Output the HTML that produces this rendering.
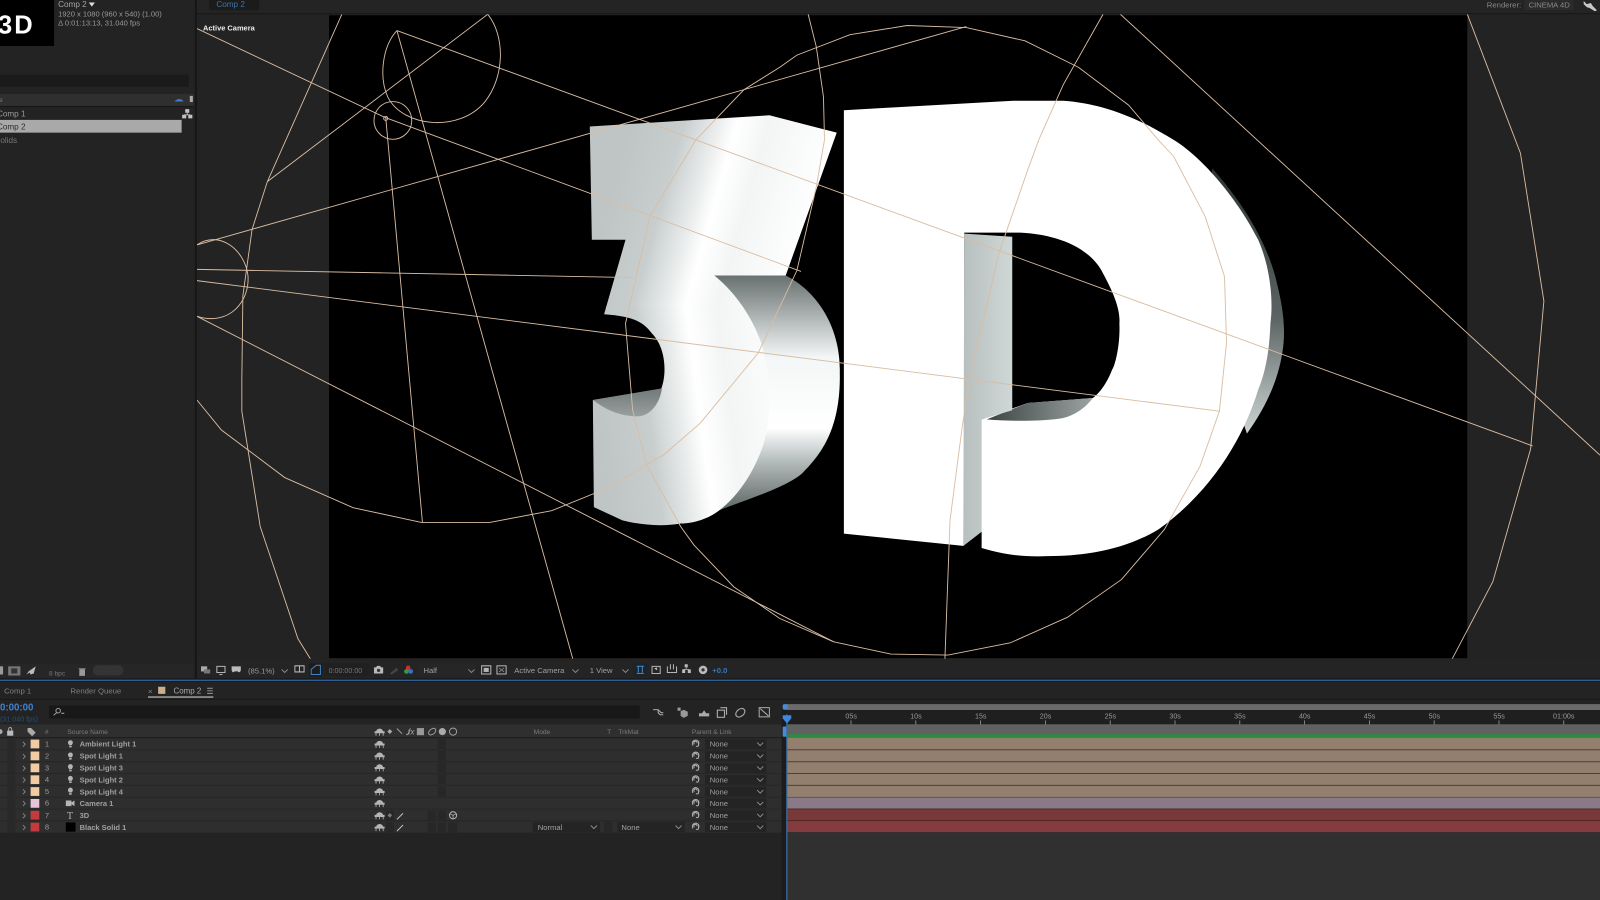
<!DOCTYPE html>
<html><head><meta charset="utf-8"><style>
html,body{margin:0;padding:0;background:#232323;overflow:hidden}
svg{display:block;filter:blur(.35px)}
text{font-family:"Liberation Sans",sans-serif;font-size:8px;fill:#9a9a9a}
.b{font-weight:bold;font-size:7.35px;fill:#a0a0a0}
.h{font-size:6.5px;fill:#7c7c7c}
.t{font-size:7.5px;fill:#a0a0a0}
.w{fill:none;stroke:#d9bda3;stroke-width:.9}
.ic{fill:#b5b5b5}
.ol{fill:none;stroke:#b5b5b5;stroke-width:1}
</style></head><body>
<svg width="1600" height="900" viewBox="0 0 1568 882" xmlns="http://www.w3.org/2000/svg">
<defs>
<linearGradient id="f3a" gradientUnits="userSpaceOnUse" x1="576" y1="273" x2="768" y2="327"><stop offset="0" stop-color="#bfc5c5"/><stop offset=".25" stop-color="#c8cece"/><stop offset=".5" stop-color="#ffffff"/><stop offset=".65" stop-color="#f3f5f5"/><stop offset="1" stop-color="#ffffff"/></linearGradient>
<linearGradient id="f3b" gradientUnits="userSpaceOnUse" x1="573" y1="313" x2="771" y2="287"><stop offset="0" stop-color="#bfc5c5"/><stop offset=".25" stop-color="#c8cece"/><stop offset=".5" stop-color="#ffffff"/><stop offset=".65" stop-color="#f3f5f5"/><stop offset="1" stop-color="#ffffff"/></linearGradient>
<linearGradient id="s3" gradientUnits="userSpaceOnUse" x1="0" y1="270" x2="0" y2="500"><stop offset="0" stop-color="#687070"/><stop offset=".35" stop-color="#f4f7f7"/><stop offset=".65" stop-color="#ffffff"/><stop offset=".8" stop-color="#b0b8b8"/><stop offset="1" stop-color="#5e6666"/></linearGradient>
<linearGradient id="sd" gradientUnits="userSpaceOnUse" x1="0" y1="170" x2="0" y2="425"><stop offset="0" stop-color="#2f3636"/><stop offset=".55" stop-color="#5a6262"/><stop offset=".85" stop-color="#a8b0b0"/><stop offset="1" stop-color="#ccd2d2"/></linearGradient>
<linearGradient id="st" gradientUnits="userSpaceOnUse" x1="945" y1="0" x2="992" y2="0"><stop offset="0" stop-color="#b7bfbf"/><stop offset="1" stop-color="#d0d7d7"/></linearGradient>
<linearGradient id="cb" gradientUnits="userSpaceOnUse" x1="970" y1="0" x2="1070" y2="0"><stop offset="0" stop-color="#3e4646"/><stop offset="1" stop-color="#9aa2a2"/></linearGradient>
<linearGradient id="h3" gradientUnits="userSpaceOnUse" x1="0" y1="381" x2="0" y2="408"><stop offset="0" stop-color="#717979"/><stop offset="1" stop-color="#979f9f"/></linearGradient>
<clipPath id="v"><rect x="193" y="14" width="1375" height="632"/></clipPath>
<clipPath id="cu"><rect x="560" y="100" width="280" height="202"/></clipPath>
<clipPath id="cl"><rect x="560" y="300" width="280" height="230"/></clipPath>
<path id="f3p" d="M578,124L754,113L820,130L770,270L700,270C725,290 742,320 748,343C757,380 755,410 748,436C740,460 725,485 705,500C695,508 680,513 667,513C650,516 630,515 610,510L582,497L581,392L648,381C654,365 652,340 639,327C630,315 620,310 592,308L613,235L580,235Z"/>
<g id="sh"><path class="ic" d="M369,3a3,2.6 0 0 1 6,0h1.5v1.2h-9V3zM368.5,4.6v2.4M375.5,4.6v2.4M372,4.6v2.4" stroke="#b5b5b5" stroke-width=".8"/></g>
<g id="lt"><path class="ic" d="M0,-3.6a2.4,2.4 0 0 1 2.4,2.4c0,1-.7,1.5-1,2.4h-2.8c-.3-.9-1-1.4-1-2.4A2.4,2.4 0 0 1 0,-3.6zM-1.2,1.8h2.4v1.6h-2.4z"/></g>
<g id="sp"><path class="ol" d="M-2.8,1.5a3.2,3.2 0 1 1 5.4,-.6M2.6,-2.6v4.1a1.4,1.4 0 0 1-2.4,.5M-1.5,.3a1.6,1.6 0 1 1 2.6,-1" stroke="#8c8c8c" stroke-width=".8"/></g>
<path id="ch" d="M0,0l3,3l3,-3" fill="none" stroke="#909090" stroke-width=".9"/>
<path id="ar" d="M0,0l2.2,2.4l-2.2,2.4" fill="none" stroke="#888" stroke-width=".9"/>
</defs>

<rect width="1568" height="882" fill="#232323"/>

<!-- top bar -->
<rect x="193" y="0" width="1375" height="14" fill="#242424"/>
<rect x="193" y="13" width="1375" height="1" fill="#161616"/>
<rect x="205" y="0" width="49" height="10" fill="#1b1b1b"/>
<text x="212" y="7" fill="#3f74ad" style="fill:#3f74ad">Comp 2</text>
<text x="1457" y="7.500" style="fill:#8a8a8a;font-size:7.600px">Renderer:</text>
<rect x="1494" y="0" width="48" height="10" fill="#2b2b2b"/>
<text x="1498" y="7.500" style="fill:#8a8a8a;font-size:7.500px">CINEMA 4D</text>
<path d="M1552,1l3,3l4,-1l2,3l4,4l-2,1l-5,-3l-3,-1l-3,-3z" fill="#c8c8c8"/>

<!-- project panel -->
<rect x="0" y="0" width="53" height="45" fill="#000"/>
<text x="-2" y="33" style="font-size:25px;font-weight:bold;fill:#fff">3<tspan dx="2">D</tspan></text>
<text x="57" y="7" style="fill:#a4a4a4;font-size:8px">Comp 2</text>
<path d="M87,2.500h6l-3,4z" fill="#ddd"/>
<text x="57" y="16" style="font-size:7.400px">1920 x 1080  (960 x 540) (1.00)</text>
<text x="57" y="25" style="font-size:7.400px">Δ 0:01:13:13, 31.040 fps</text>
<rect x="0" y="73" width="185" height="12" fill="#1a1a1a"/>
<rect x="0" y="92" width="190" height="12" fill="#2f2f2f"/>
<rect x="0" y="104" width="190" height="1" fill="#151515"/>
<text x="-1" y="100" class="h">e</text>
<path d="M171,99.500q5,-5 9,0z" fill="#3f7cc4"/>
<rect x="186" y="94" width="3" height="6" fill="#aaa"/>
<text x="-3" y="114" style="font-size:8px">Comp 1</text>
<rect x="0" y="117.500" width="178" height="12.500" fill="#a9a9a9"/>
<text x="-3" y="127" style="font-size:8px;fill:#2c2c2c">Comp 2</text>
<text x="-5" y="140" style="font-size:8px;fill:#777">Solids</text>
<path d="M181.500,107h4v3.500h-4zM178.500,112.500h4v3.500h-4zM184.500,112.500h4v3.500h-4z" fill="#c2c2c2"/>
<path d="M183.500,110v2.500M180.500,112.500h6" stroke="#c2c2c2" stroke-width=".8"/>
<rect x="191" y="0" width="2" height="666" fill="#161616"/>

<!-- project bottom bar -->
<rect x="0" y="650" width="190" height="15" fill="#262626"/>
<rect x="0" y="653" width="3" height="8" fill="#999"/>
<rect x="8" y="653" width="12" height="9" fill="#777"/><rect x="11" y="655" width="6" height="5" fill="#333"/>
<path d="M26,661l2,-3l7,-5l-2,7l-3,1l-1,-2z" fill="#bbb"/>
<text x="48" y="662" style="font-size:6.500px;fill:#777">8 bpc</text>
<path d="M77,655h7M78,656h5v6h-5z" fill="#999" stroke="#999" stroke-width=".6"/>
<rect x="91" y="652" width="30" height="10" rx="5" fill="#343434"/>

<!-- viewer -->
<rect x="193" y="14" width="130" height="632" fill="#232323"/>
<rect x="322.500" y="15" width="1115.500" height="630" fill="#000"/>
<rect x="1438" y="14" width="130" height="632" fill="#242323"/>
<text x="199" y="30" style="font-size:7.300px;font-weight:bold;fill:#eee">Active Camera</text>

<!-- 3 -->
<path d="M700,270L770,270C800,285 824,320 823,365C824,420 805,445 786,464C770,478 730,490 705,500L700,430Z" fill="url(#s3)"/>
<use href="#f3p" fill="url(#f3a)" clip-path="url(#cu)"/>
<use href="#f3p" fill="url(#f3b)" clip-path="url(#cl)"/>
<path d="M581,392L648.600,380.600C647,395 637,408 625,408C605,408 592,400 581,392Z" fill="url(#h3)"/>

<!-- D -->
<path d="M1188,165C1222,203 1244,243 1252,280C1258,305 1259,320 1258,335C1255,370 1240,400 1222,425L1180,300Z" fill="url(#sd)"/>
<path d="M827,108L993,98.700L1042,98.700C1075,101 1110,112 1150,137C1175,152 1210,190 1233,235C1245,262 1248,295 1245,317C1244,345 1240,365 1233,382C1220,425 1190,480 1135,519C1100,540 1060,545 1027,545C1005,546 985,544 962,537L962,521L944,535L827,523Z" fill="#fff"/>
<path d="M945,228L1000,228C1040,230 1070,245 1081,268C1093,290 1098,305 1097,317C1098,340 1092,360 1090,362C1085,375 1078,385 1071,390L1007,395L962,411L945,411Z" fill="#000"/>
<path d="M967,411L1007,395L1071,390C1062,402 1050,408 1040,410C1020,413 990,413 967,411Z" fill="url(#cb)"/>
<path d="M945,229L992,232L992,402L962,411L962,521L944,535Z" fill="url(#st)"/>

<!-- wireframe -->
<g clip-path="url(#v)">
<path class="w" d="M389,30L1502,437"/>
<path class="w" d="M193,28L377,115L785,266"/>
<path class="w" d="M193,264L620,272"/>
<path class="w" d="M193,275L1195,403"/>
<path class="w" d="M193,240L947,26"/>
<path class="w" d="M193,310L817,629"/>
<path class="w" d="M389,30L562,648"/>
<path class="w" d="M378,115L414,512"/>
<path class="w" d="M335,14L262,178L478,14"/>
<path class="w" d="M262,178L247,225L238,290L237,372L237,403L255,516L292,626L305,647"/>
<path class="w" d="M193,392L217,421.400L279,468L346,497.500L413,512L480,512L540.600,500.500L594.600,478.600L650,446L686,415L743,346L781,265L800,183L808,137L807,95L800,46L792,14"/>
<path class="w" d="M947,27L889,25L833,34L781,54L764,66L729,88L682,137L637,212L613,317L620,402L634,456L667,516L680,534L719,575L764,606L817,629L873,641L929,642L990,630L1046,605L1099,568L1141,519L1176,457L1195,403L1202,336L1200,271L1181,212L1150,153L1135,137L1106,103L1057,66L1004.500,40L947,27"/>
<path class="w" d="M1081,14L1042,83L1018,137L1007,167L979,248L950,372L943,418L931,510L926,646"/>
<path class="w" d="M1098,14L1568,446"/>
<path class="w" d="M1438,14L1490,150L1513,295L1500,440L1463,570L1423,646"/>
<path class="w" d="M389,30C375,45 371,75 380,95C395,125 450,130 475,100C495,75 495,35 478,14"/>
<circle class="w" cx="385" cy="118" r="18.500"/>
<circle class="w" cx="378" cy="116" r="2"/>
<path class="w" d="M193,240C215,225 240,245 243,270C245,295 225,320 193,310"/>
</g>

<!-- viewer toolbar -->
<rect x="193" y="646" width="1375" height="20" fill="#242424"/>
<rect x="193" y="645.500" width="1375" height="1" fill="#2a2020"/>
<rect x="197" y="653" width="6" height="5" fill="#aaa"/><rect x="200" y="656" width="6" height="4" fill="#777"/>
<path d="M212.500,653h8v6h-8zM215,661h3" class="ol"/>
<path d="M227,653h9v4q-1,3 -3,1h-3q-2,2 -3,-1z" fill="#bbb"/>
<text x="243" y="660" style="font-size:7.500px">(85.1%)</text>
<use href="#ch" x="276" y="656"/>
<path d="M289,652.500h9v6h-9zM293.500,652.500v6" class="ol"/>
<rect x="303" y="650" width="13" height="13" fill="#1c1c1c"/>
<path d="M305,661v-5l5,-4h4v9z" fill="none" stroke="#4080c0" stroke-width="1"/>
<rect x="318" y="650" width="44" height="13" fill="#202020"/>
<text x="322" y="659.500" style="font-size:7px;fill:#777">0:00:00:00</text>
<path d="M366.500,654h2l1,-1.500h3l1,1.500h2v6h-9z" fill="#b8b8b8"/><circle cx="371" cy="657" r="1.600" fill="#333"/>
<path d="M382,660l7,-6l1,3l-6,4z" fill="#444"/>
<circle cx="400" cy="654.500" r="2.300" fill="#c83030"/><circle cx="398.300" cy="658" r="2.300" fill="#2e9a4a"/><circle cx="402.500" cy="658" r="2.300" fill="#3a6ec4"/>
<rect x="409" y="650" width="58" height="13" fill="#262626"/>
<text x="415" y="659.500" class="t">Half</text>
<use href="#ch" x="459" y="656"/>
<path d="M472,652.500h9v8h-9z" class="ol"/><rect x="474" y="654.500" width="5" height="4" fill="#b5b5b5"/>
<rect x="487" y="652.500" width="9" height="8" class="ol"/><path d="M489,654.500l5,4M494,654.500l-5,4" stroke="#999" stroke-width=".7"/>
<text x="504" y="659.500" class="t">Active Camera</text>
<use href="#ch" x="561" y="656"/>
<text x="578" y="659.500" class="t">1 View</text>
<use href="#ch" x="610" y="656"/>
<rect x="621" y="650" width="13" height="13" fill="#1c2329"/>
<path d="M624,653h7M625.500,653v6M629.500,653v6M624,660h7" stroke="#3d82c4" stroke-width="1.100" fill="none"/>
<path d="M639,653h8v7h-8z" class="ol"/><path d="M641,655l3,2v-3z" fill="#bbb"/>
<path d="M654,653v6h9v-6M657,651v5M660,651v5" class="ol"/>
<path d="M671,651h3v3h-3zM668.500,656h3v3.500h-3zM674,656h3v3.500h-3z" fill="#bbb"/>
<path d="M672.500,654v2M670,656h5" stroke="#bbb" stroke-width=".7"/>
<circle cx="689" cy="656.500" r="4.200" fill="#bbb"/><circle cx="689" cy="656.500" r="1.600" fill="#333"/>
<text x="698" y="659.500" style="font-size:7.500px;fill:#3a76bb;font-weight:bold">+0.0</text>

<!-- divider -->
<rect x="0" y="665" width="1568" height="1" fill="#131313"/>
<rect x="0" y="666" width="1568" height="1.400" fill="#2f5f92"/>
<rect x="0" y="667.400" width="1568" height="1" fill="#141414"/>

<!-- timeline tabs -->
<rect x="0" y="668" width="1568" height="214" fill="#232323"/>
<text x="4" y="679.500" style="font-size:7.600px;fill:#808080">Comp 1</text>
<text x="69" y="679.500" style="font-size:7.600px;fill:#808080">Render Queue</text>
<text x="145" y="680" style="font-size:7.600px;fill:#888">×</text>
<rect x="155" y="673" width="7" height="7" fill="#c9b18d"/>
<text x="170" y="679.500" style="font-size:7.800px;fill:#aaa">Comp 2</text>
<path d="M203,674.500h5.500M203,677h5.500M203,679.500h5.500" stroke="#999" stroke-width=".9"/>
<rect x="145" y="682.500" width="64" height="1.200" fill="#bbb"/>
<rect x="0" y="685" width="1568" height="1" fill="#191919"/>

<!-- time + search -->
<text x="0" y="696.500" style="font-size:9.500px;font-weight:bold;fill:#3f80cf">0:00:00</text>
<text x="0" y="707" style="font-size:7px;fill:#23507f">(31.040 fps)</text>
<rect x="48" y="691.500" width="579" height="12.500" fill="#181818"/>
<circle cx="57" cy="696.500" r="2.200" fill="none" stroke="#aaa" stroke-width=".9"/>
<path d="M55.500,698.500l-3,2.500M60,699h3" stroke="#aaa" stroke-width=".9"/>
<path d="M640,695.500h5l3,3h2M645,695.500v3l2,2h3" fill="none" stroke="#bbb" stroke-width=".9"/>
<path d="M667,697l3,-1.500l4,2v4l-4,2l-3,-2zM664,693.500h3v3h-3z" fill="#999"/>
<path d="M685,702v-3h10v3zM688,699l2,-3l2,3z" fill="#aaa"/>
<path d="M703,696h7v7h-7zM706,693.500h6v7" fill="none" stroke="#aaa" stroke-width="1.100"/>
<ellipse cx="725.500" cy="698.500" rx="5" ry="3.500" fill="none" stroke="#aaa" stroke-width="1.100" transform="rotate(-40 725.500 698.500)"/>
<rect x="744" y="693.500" width="10" height="9" fill="none" stroke="#aaa"/><path d="M745,694.500l8,7" stroke="#aaa"/>

<!-- layer header -->
<rect x="0" y="710" width="767" height="13" fill="#2f2f2f"/>
<rect x="0" y="722.500" width="767" height="1" fill="#1b1b1b"/>
<circle cx="0" cy="717" r="2.500" fill="#aaa"/>
<rect x="7" y="716" width="6" height="5" fill="#bbb"/><path d="M8.500,716v-1.500a1.500,1.500 0 0 1 3,0v1.500" fill="none" stroke="#bbb" stroke-width=".8"/>
<path d="M27,713.500h3.500l4.500,4.500l-3.500,3.500l-4.500,-4.500z" fill="#aaa"/>
<text x="44" y="719.500" class="h">#</text>
<text x="66" y="719.500" class="h">Source Name</text>
<use href="#sh" x="0" y="714"/>
<path d="M382,714.500l2.400,2.400l-2.400,2.400l-2.400,-2.400z" fill="#aaa"/>
<path d="M389,714l5,5M398,720q3,0 3,-5" stroke="#aaa" fill="none" stroke-width=".9"/>
<text x="400" y="720" style="font-size:8px;font-style:italic;fill:#aaa">fx</text>
<rect x="408.500" y="713.500" width="7" height="7" fill="#999"/>
<ellipse cx="423.500" cy="717" rx="4" ry="2.600" fill="none" stroke="#999" transform="rotate(-40 423.500 717)"/>
<circle cx="433.500" cy="717" r="3.500" fill="#aaa"/>
<circle cx="444" cy="717" r="3.500" fill="none" stroke="#aaa" stroke-width=".9"/>
<text x="523" y="719.500" class="h">Mode</text>
<text x="595" y="719.500" class="h">T</text>
<text x="606" y="719.500" class="h">TrkMat</text>
<text x="678" y="719.500" class="h">Parent &amp; Link</text>

<!-- layer rows -->
<rect x="0" y="723.500" width="767" height="92.500" fill="#2e2e2e"/>
<path d="M0,734.900H767M0,746.500H767M0,758H767M0,769.700H767M0,781.400H767M0,792.900H767M0,804.400H767" stroke="#272727" stroke-width="1"/>
<rect x="766" y="690" width="5" height="192" fill="#1c1c1c"/>

<g fill="#292929">
<rect x="7" y="724" width="8" height="10"/><rect x="7" y="736" width="8" height="10"/><rect x="7" y="747.500" width="8" height="10"/><rect x="7" y="759" width="8" height="10"/><rect x="7" y="770.500" width="8" height="10"/><rect x="7" y="782.500" width="8" height="10"/><rect x="7" y="794" width="8" height="10"/><rect x="7" y="805.500" width="8" height="10"/>
</g>

<g fill="#f0cba3">
<rect x="30" y="724.800" width="8.500" height="8.600"/><rect x="30" y="736.500" width="8.500" height="8.600"/><rect x="30" y="748.200" width="8.500" height="8.600"/><rect x="30" y="759.800" width="8.500" height="8.600"/><rect x="30" y="771.400" width="8.500" height="8.600"/>
</g>
<rect x="30" y="783" width="8.500" height="8.600" fill="#e6c4da"/>
<rect x="30" y="794.600" width="8.500" height="8.600" fill="#c53a3e"/>
<rect x="30" y="806.200" width="8.500" height="8.600" fill="#c53a3e"/>

<use href="#ar" x="22.500" y="727"/><use href="#ar" x="22.500" y="739"/><use href="#ar" x="22.500" y="750.500"/><use href="#ar" x="22.500" y="762"/><use href="#ar" x="22.500" y="773.500"/><use href="#ar" x="22.500" y="785"/><use href="#ar" x="22.500" y="797"/><use href="#ar" x="22.500" y="808.500"/>

<g>
<text x="44" y="731.500" style="font-size:7.500px">1</text><text x="44" y="743.500" style="font-size:7.500px">2</text><text x="44" y="755" style="font-size:7.500px">3</text><text x="44" y="766.500" style="font-size:7.500px">4</text><text x="44" y="778" style="font-size:7.500px">5</text><text x="44" y="789.500" style="font-size:7.500px">6</text><text x="44" y="801.500" style="font-size:7.500px">7</text><text x="44" y="813" style="font-size:7.500px">8</text>
</g>

<use href="#lt" x="69" y="729"/><use href="#lt" x="69" y="741"/><use href="#lt" x="69" y="752.500"/><use href="#lt" x="69" y="764"/><use href="#lt" x="69" y="775.500"/>
<path d="M64.500,784.500h5.500v5.500h-5.500zM70,786.500l3,-2v5.500l-3,-2z" fill="#b5b5b5"/>
<text x="65.500" y="802.500" style="font-size:10px;font-family:'Liberation Serif',serif;fill:#b5b5b5">T</text>
<rect x="64.500" y="806" width="9.500" height="9" fill="#000"/>

<text x="78" y="731.800" class="b">Ambient Light 1</text>
<text x="78" y="743.500" class="b">Spot Light 1</text>
<text x="78" y="755.200" class="b">Spot Light 3</text>
<text x="78" y="766.800" class="b">Spot Light 2</text>
<text x="78" y="778.400" class="b">Spot Light 4</text>
<text x="78" y="790" class="b">Camera 1</text>
<text x="78" y="801.600" class="b">3D</text>
<text x="78" y="813.200" class="b">Black Solid 1</text>

<use href="#sh" x="0" y="726"/><use href="#sh" x="0" y="737.500"/><use href="#sh" x="0" y="749"/><use href="#sh" x="0" y="761"/><use href="#sh" x="0" y="772.500"/><use href="#sh" x="0" y="784"/><use href="#sh" x="0" y="796"/><use href="#sh" x="0" y="807.500"/>

<g fill="#272727">
<rect x="429" y="724.500" width="8" height="9.500"/><rect x="429" y="736" width="8" height="9.500"/><rect x="429" y="747.500" width="8" height="9.500"/><rect x="429" y="759" width="8" height="9.500"/><rect x="429" y="771" width="8" height="9.500"/>
<rect x="419" y="794.500" width="8" height="9.500"/><rect x="429" y="794.500" width="8" height="9.500"/>
<rect x="419" y="806" width="8" height="9.500"/><rect x="429" y="806" width="8" height="9.500"/><rect x="439" y="806" width="9" height="9.500"/>
<rect x="378" y="794.500" width="8" height="9.500"/><rect x="378" y="806" width="8" height="9.500"/>
</g>
<path d="M382,796.800l2.300,2.300l-2.300,2.300l-2.300,-2.300z" fill="#777"/>
<path d="M389,803l6,-6M389,814.500l6,-6" stroke="#bbb" stroke-width="1"/>
<circle cx="444" cy="799" r="3.500" fill="none" stroke="#bbb" stroke-width=".9"/>
<path d="M441,797.500l3,1.500l3,-1.500M444,799v3.500" stroke="#bbb" stroke-width=".7" fill="none"/>

<!-- Mode / TrkMat -->
<rect x="522" y="805.500" width="66" height="10" fill="#242424"/>
<text x="527" y="813.200" class="t">Normal</text>
<use href="#ch" x="579" y="809"/>
<rect x="592" y="805.500" width="8" height="10" fill="#272727"/>
<rect x="605" y="805.500" width="66" height="10" fill="#242424"/>
<text x="609" y="813.200" class="t">None</text>
<use href="#ch" x="662" y="809"/>

<!-- Parent -->
<g fill="#242424">
<rect x="691" y="724.500" width="60" height="9.500"/><rect x="691" y="736.200" width="60" height="9.500"/><rect x="691" y="747.900" width="60" height="9.500"/><rect x="691" y="759.500" width="60" height="9.500"/><rect x="691" y="771" width="60" height="9.500"/><rect x="691" y="782.600" width="60" height="9.500"/><rect x="691" y="794.200" width="60" height="9.500"/><rect x="691" y="805.800" width="60" height="9.500"/>
</g>
<g>
<text x="695.500" y="731.800" class="t">None</text><text x="695.500" y="743.500" class="t">None</text><text x="695.500" y="755.200" class="t">None</text><text x="695.500" y="766.800" class="t">None</text><text x="695.500" y="778.400" class="t">None</text><text x="695.500" y="790" class="t">None</text><text x="695.500" y="801.600" class="t">None</text><text x="695.500" y="813.200" class="t">None</text>
</g>
<use href="#ch" x="742" y="727.700"/><use href="#ch" x="742" y="739.400"/><use href="#ch" x="742" y="751.100"/><use href="#ch" x="742" y="762.700"/><use href="#ch" x="742" y="774.300"/><use href="#ch" x="742" y="785.900"/><use href="#ch" x="742" y="797.500"/><use href="#ch" x="742" y="809.100"/>
<use href="#sp" x="682" y="729"/><use href="#sp" x="682" y="740.800"/><use href="#sp" x="682" y="752.400"/><use href="#sp" x="682" y="764"/><use href="#sp" x="682" y="775.600"/><use href="#sp" x="682" y="787.200"/><use href="#sp" x="682" y="798.800"/><use href="#sp" x="682" y="810.400"/>

<!-- time ruler -->
<rect x="771" y="686" width="797" height="4" fill="#232323"/>
<rect x="771" y="690" width="797" height="5.800" fill="#6b6b6b"/>
<rect x="771" y="695.800" width="797" height="14" fill="#1f1f1f"/>
<rect x="771" y="709.800" width="797" height="10" fill="#5f6261"/>
<rect x="771" y="719.600" width="797" height="3.300" fill="#2a8c3e"/>
<g>
<text x="828.500" y="704" style="font-size:7px">05s</text><text x="892" y="704" style="font-size:7px">10s</text><text x="955.500" y="704" style="font-size:7px">15s</text><text x="1019" y="704" style="font-size:7px">20s</text><text x="1082.500" y="704" style="font-size:7px">25s</text><text x="1146" y="704" style="font-size:7px">30s</text><text x="1209.500" y="704" style="font-size:7px">35s</text><text x="1273" y="704" style="font-size:7px">40s</text><text x="1336.500" y="704" style="font-size:7px">45s</text><text x="1400" y="704" style="font-size:7px">50s</text><text x="1463.500" y="704" style="font-size:7px">55s</text><text x="1522" y="704" style="font-size:7px">01:00s</text>
</g>
<path d="M834,706v4M897.500,706v4M961,706v4M1024.500,706v4M1088,706v4M1151.500,706v4M1215,706v4M1278.500,706v4M1342,706v4M1405.500,706v4M1469,706v4M1532.500,706v4" stroke="#999" stroke-width=".8"/>

<!-- tracks -->
<rect x="771" y="722.900" width="797" height="69.800" fill="#927f6e"/>
<rect x="771" y="781.400" width="797" height="11.400" fill="#8a7a88"/>
<rect x="771" y="792.800" width="797" height="11.400" fill="#793939"/>
<rect x="771" y="804.200" width="797" height="11.400" fill="#843c3f"/>
<path d="M771,734.800H1568M771,746.500H1568M771,758H1568M771,769.700H1568" stroke="#4c4136" stroke-width="1"/>
<path d="M771,781.400H1568" stroke="#5e5555" stroke-width="1"/>
<path d="M771,792.800H1568" stroke="#4c2c2e" stroke-width="1"/>
<path d="M771,804.200H1568" stroke="#4f2526" stroke-width="1"/>
<rect x="771" y="815.600" width="797" height="66.400" fill="#303030"/>

<!-- playhead -->
<rect x="767" y="690" width="5" height="5.500" rx="1.500" fill="#4a8ad0"/>
<rect x="767" y="712" width="4" height="10" rx="1" fill="#4a8ad0"/>
<rect x="770.500" y="700" width="1.200" height="182" fill="#3a6ea5"/>
<path d="M767,701h8.500v3l-4.200,5l-4.300,-5z" fill="#3f86dc"/>
</svg>
</body></html>
